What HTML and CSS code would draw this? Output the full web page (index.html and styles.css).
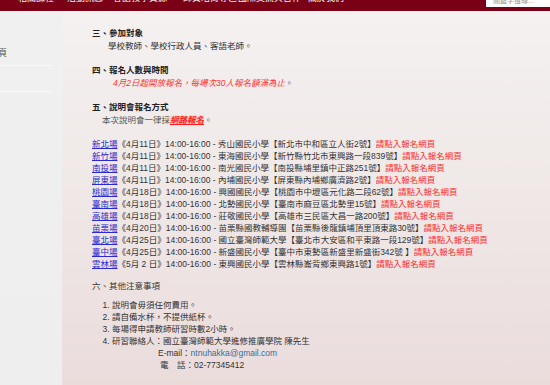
FILE: index.html
```html
<!DOCTYPE html>
<html lang="zh-Hant">
<head>
<meta charset="utf-8">
<title>說明會</title>
<link rel="stylesheet" href="styles.css">
</head>
<body>
<header class="topbar">
  <ul class="nav">
    <li class="nav-item w1">相關課程</li>
    <li class="nav-item w2">活動訊息</li>
    <li class="nav-item w3">客語教學資源</li>
    <li class="nav-item w4">師資培育專區</li>
    <li class="nav-item w5">國際交流與合作</li>
    <li class="nav-item w6">關於我們</li>
  </ul>
  <div class="search"><span class="search-ph">關鍵字搜尋...</span></div>
</header>
<div class="layout">
  <aside class="sidebar">
    <div class="side-item"><span class="side-text">最新消息與公告頁</span></div>
    <div class="side-item"></div>
  </aside>
  <main class="content">
    <section class="block">
      <h3 class="head">三、參加對象</h3>
      <p class="indent-a">學校教師、學校行政人員、客語老師。</p>
    </section>
    <section class="block">
      <h3 class="head">四、報名人數與時間</h3>
      <p class="indent-b"><em class="red-note">4月2日起開放報名，每場次30人報名額滿為止</em>。</p>
    </section>
    <section class="block">
      <h3 class="head">五、說明會報名方式</h3>
      <p class="indent-c">本次說明會一律採<a class="hl">網路報名</a>。</p>
    </section>
    <section class="block rows">
      <div class="row"><a class="site">新北場</a>《4月11日》14:00-16:00 - 秀山國民小學【新北市中和區立人街2號】<a class="signup">請點入報名網頁</a></div>
      <div class="row"><a class="site">新竹場</a>《4月11日》14:00-16:00 - 東海國民小學【新竹縣竹北市東興路一段839號】<a class="signup">請點入報名網頁</a></div>
      <div class="row"><a class="site">南投場</a>《4月11日》14:00-16:00 - 南光國民小學【南投縣埔里鎮中正路251號】<a class="signup">請點入報名網頁</a></div>
      <div class="row"><a class="site">屏東場</a>《4月11日》14:00-16:00 - 內埔國民小學【屏東縣內埔鄉廣濟路2號】<a class="signup">請點入報名網頁</a></div>
      <div class="row"><a class="site">桃園場</a>《4月18日》14:00-16:00 - 興國國民小學【桃園市中壢區元化路二段62號】<a class="signup">請點入報名網頁</a></div>
      <div class="row"><a class="site">臺南場</a>《4月18日》14:00-16:00 - 北勢國民小學【臺南市麻豆區北勢里15號】<a class="signup">請點入報名網頁</a></div>
      <div class="row"><a class="site">高雄場</a>《4月18日》14:00-16:00 - 莊敬國民小學【高雄市三民區大昌一路200號】<a class="signup">請點入報名網頁</a></div>
      <div class="row"><a class="site">苗栗場</a>《4月20日》14:00-16:00 - 苗栗縣國教輔導團【苗栗縣後龍鎮埔頂里頂東路30號】<a class="signup">請點入報名網頁</a></div>
      <div class="row"><a class="site">臺北場</a>《4月25日》14:00-16:00 - 國立臺灣師範大學【臺北市大安區和平東路一段129號】<a class="signup">請點入報名網頁</a></div>
      <div class="row"><a class="site">臺中場</a>《4月25日》14:00-16:00 - 新盛國民小學【臺中市東勢區新盛里新盛街342號 】<a class="signup">請點入報名網頁</a></div>
      <div class="row"><a class="site">雲林場</a>《5月 2 日》14:00-16:00 - 東興國民小學【雲林縣崙背鄉東興路1號】<a class="signup">請點入報名網頁</a></div>
    </section>
    <section class="block">
      <h3 class="head plain">六、其他注意事項</h3>
      <ol class="notes">
        <li>說明會毋須任何費用。</li>
        <li>請自備水杯，不提供紙杯。</li>
        <li>每場得申請教師研習時數2小時。</li>
        <li>研習聯絡人：國立臺灣師範大學進修推廣學院 陳先生
          <div class="contact">E-mail：<a class="mail">ntnuhakka@gmail.com</a></div>
          <div class="contact tel">電　話：02-77345412</div>
        </li>
      </ol>
    </section>
  </main>
</div>
</body>
</html>
```
FILE: styles.css
```css
* { box-sizing: border-box; }
html, body {
  margin: 0;
  padding: 0;
  height: 100%;
  overflow: hidden;
}
body {
  font-family: "Liberation Sans", "Noto Sans CJK TC", sans-serif;
  font-size: 8.5px;
  line-height: 12px;
  color: #333;
  background: #f1efee;
}
.topbar {
  height: 11px;
  background: #7a0015;
  display: flex;
  position: relative;
  overflow: hidden;
}
.nav {
  list-style: none;
  margin: -9px 0 0 18px;
  padding: 0;
  display: flex;
  color: #fff;
  font-size: 9px;
  line-height: 14px;
}
.nav-item { white-space: nowrap; }
.w1 { width: 49px; }
.w2 { width: 46px; }
.w3 { width: 70px; }
.w4 { width: 55px; }
.w5 { width: 70px; }
.w6 { width: 60px; }
.search {
  margin-left: auto;
  width: 64px;
  height: 7px;
  background: #fff;
  overflow: hidden;
  padding-left: 7px;
}
.search-ph {
  display: block;
  font-size: 7px;
  line-height: 8px;
  margin-top: -3px;
  color: #999;
}
.layout {
  display: flex;
  height: 374px;
}
.sidebar {
  width: 62px;
  flex: none;
  background: linear-gradient(#f0f0f0, #eeeeee);
  padding-top: 29px;
  overflow: hidden;
}
.side-item {
  height: 26px;
  margin-right: 10px;
  border-bottom: 1px solid #fbfbfb;
  display: flex;
  align-items: center;
  justify-content: flex-end;
  color: #555;
  font-size: 9px;
  overflow: hidden;
}
.side-text {
  white-space: nowrap;
  flex: none;
  margin-right: 45px;
}
.content {
  flex: 1;
  background: linear-gradient(#f4f1f0, #efe8e7 50%, #ebdcdc);
  padding: 16px 0 0 30px;
}
.block { margin-bottom: 12px; }
.head {
  margin: 0;
  font-size: 8.5px;
  line-height: 13px;
  font-weight: bold;
  color: #222;
}
.head.plain { font-weight: normal; color: #333; }
p { margin: 0; }
.indent-a { padding-left: 16px; }
.indent-b { padding-left: 21px; color: #555; }
.indent-c { padding-left: 10px; color: #555; }
.red-note {
  color: #ff3030;
  font-style: italic;
}
.hl {
  color: #ff1a1a;
  font-weight: bold;
  font-style: italic;
  text-decoration: underline;
  background: #ffd6d6;
}
.rows { margin-bottom: 10px; }
.row { white-space: nowrap; color: #333; }
.site {
  color: #2a2ad0;
  text-decoration: underline;
}
.signup { color: #ff2a2a; }
.notes {
  margin: 6px 0 0;
  padding-left: 20px;
}
.notes li { padding-left: 0; }
.contact { margin-left: 46px; }
.tel { margin-left: 48px; }
.mail { color: #3a6d9a; }
```
